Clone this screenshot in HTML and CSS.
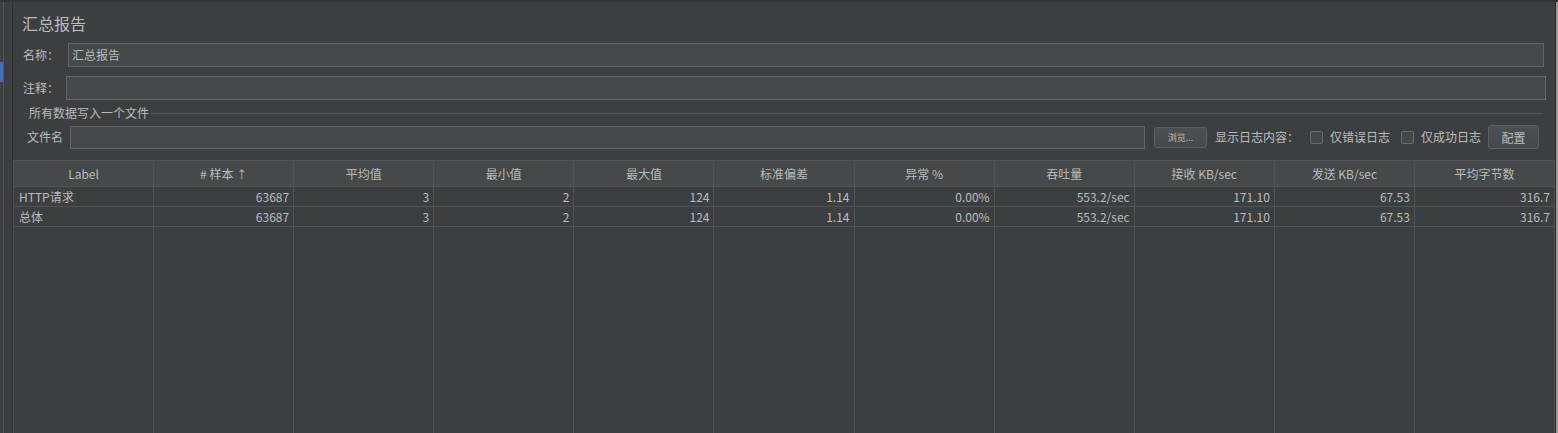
FILE: index.html
```html
<!DOCTYPE html>
<html lang="zh">
<head>
<meta charset="utf-8">
<title>汇总报告</title>
<link rel="stylesheet" href="styles.css">
</head>
<body>
<div class="app">
  <div class="rail"><div class="rail-mark"></div></div>
  <div class="gutter"></div>
  <div class="main">
    <div class="title">汇总报告</div>
    <div class="row row-name">
      <span class="lbl lbl-name">名称：</span>
      <div class="field field-name">汇总报告</div>
    </div>
    <div class="row row-comment">
      <span class="lbl lbl-comment">注释：</span>
      <div class="field field-comment"></div>
    </div>
    <div class="legend-row">
      <span class="legend-line legend-line-short"></span>
      <span class="legend">所有数据写入一个文件</span>
      <span class="legend-line"></span>
    </div>
    <div class="row row-file">
      <span class="lbl lbl-file">文件名</span>
      <div class="field field-file"></div>
      <button class="btn btn-browse">浏览...</button>
      <span class="lbl lbl-show">显示日志内容：</span>
      <span class="check"></span>
      <span class="lbl lbl-check">仅错误日志</span>
      <span class="check"></span>
      <span class="lbl lbl-check lbl-check-last">仅成功日志</span>
      <button class="btn btn-config">配置</button>
    </div>
    <div class="table">
      <div class="th">Label</div>
      <div class="th"># 样本 <span class="arrow">↑</span></div>
      <div class="th">平均值</div>
      <div class="th">最小值</div>
      <div class="th">最大值</div>
      <div class="th">标准偏差</div>
      <div class="th">异常 %</div>
      <div class="th">吞吐量</div>
      <div class="th">接收 KB/sec</div>
      <div class="th">发送 KB/sec</div>
      <div class="th">平均字节数</div>

      <div class="td td-left">HTTP请求</div>
      <div class="td">63687</div>
      <div class="td">3</div>
      <div class="td">2</div>
      <div class="td">124</div>
      <div class="td">1.14</div>
      <div class="td">0.00%</div>
      <div class="td">553.2/sec</div>
      <div class="td">171.10</div>
      <div class="td">67.53</div>
      <div class="td">316.7</div>

      <div class="td td-left">总体</div>
      <div class="td">63687</div>
      <div class="td">3</div>
      <div class="td">2</div>
      <div class="td">124</div>
      <div class="td">1.14</div>
      <div class="td">0.00%</div>
      <div class="td">553.2/sec</div>
      <div class="td">171.10</div>
      <div class="td">67.53</div>
      <div class="td">316.7</div>

      <div class="tf"></div><div class="tf"></div><div class="tf"></div><div class="tf"></div>
      <div class="tf"></div><div class="tf"></div><div class="tf"></div><div class="tf"></div>
      <div class="tf"></div><div class="tf"></div><div class="tf"></div>
    </div>
  </div>
  <div class="edge"></div>
</div>
</body>
</html>
```

FILE: styles.css
```css
* { box-sizing: border-box; }
html, body {
  margin: 0;
  padding: 0;
  background: #3c3f41;
  width: 1558px;
  height: 433px;
  overflow: hidden;
}
body {
  font-family: "Noto Sans CJK SC", "Noto Sans", "Liberation Sans", sans-serif;
  font-size: 12px;
  color: #bbbbbb;
}
.app {
  display: flex;
  height: 433px;
  border-top: 2px solid #323436;
}
.rail {
  width: 4px;
  border-right: 1px solid #505354;
  padding-top: 60px;
}
.rail-mark {
  width: 3px;
  height: 20px;
  background: #4a6fb0;
}
.gutter {
  width: 9px;
  border-right: 1px solid #2d2f31;
}
.main {
  width: 1542px;
  display: flex;
  flex-direction: column;
  padding-top: 11px;
}
.edge {
  width: 3px;
  border-left: 1px solid #2b2d2f;
  background: #9a9a9a;
}
.title {
  height: 20px;
  line-height: 20px;
  font-size: 16px;
  padding-left: 9px;
}
.row {
  display: flex;
  align-items: center;
  height: 24px;
}
.row-name { margin-top: 10px; padding-left: 10px; }
.row-comment { margin-top: 9px; padding-left: 10px; }
.row-file { margin-top: 5px; padding-left: 14px; }
.lbl { line-height: 16px; white-space: nowrap; }
.lbl-name { width: 45px; }
.lbl-comment { width: 43px; }
.lbl-file { width: 43px; }
.field {
  height: 24px;
  border: 1px solid #646464;
  background: #45494a;
  line-height: 22px;
  padding-left: 3px;
}
.field-name { flex: 1; margin-right: 11px; }
.field-comment { flex: 1; margin-right: 9px; }
.field-file { width: 1075px; height: 23px; }
.btn {
  font-family: inherit;
  color: #bbbbbb;
  background: linear-gradient(#4c5052, #46494b);
  border: 1px solid #5e6060;
  border-radius: 3px;
  padding: 0;
}
.btn-browse {
  width: 53px;
  height: 21px;
  margin-left: 9px;
  font-size: 9px;
}
.lbl-show { margin-left: 8px; margin-right: 11px; }
.check {
  width: 13px;
  height: 13px;
  border: 1px solid #6b6b6b;
  border-radius: 2px;
  background: #43494a;
  margin-right: 7px;
}
.lbl-check { margin-right: 11px; }
.lbl-check-last { margin-right: 7px; }
.btn-config {
  width: 51px;
  height: 24px;
  font-size: 12px;
}
.legend-row {
  display: flex;
  align-items: center;
  height: 14px;
  margin-top: 6px;
  margin-left: 12px;
  margin-right: 12px;
}
.legend-line {
  flex: 1;
  height: 1px;
  background: #55585a;
}
.legend-line-short { flex: 0 0 3px; }
.legend { padding: 0 2px 0 1px; line-height: 14px; }
.table {
  margin-top: 11px;
  flex: 1;
  display: grid;
  grid-template-columns: repeat(11, 1fr);
  grid-template-rows: 26px 20px 20px 1fr;
  border-top: 1px solid #505354;
  border-left: 1px solid #505354;
}
.th {
  background: #45494a;
  border-right: 1px solid #505354;
  border-bottom: 1px solid #505354;
  text-align: center;
  line-height: 25px;
}
.arrow { font-size: 11px; }
.td {
  border-right: 1px solid #505354;
  border-bottom: 1px solid #505354;
  text-align: right;
  line-height: 19px;
  padding-right: 4px;
}
.td-left { text-align: left; padding-left: 5px; }
.tf { border-right: 1px solid #505354; }
```
